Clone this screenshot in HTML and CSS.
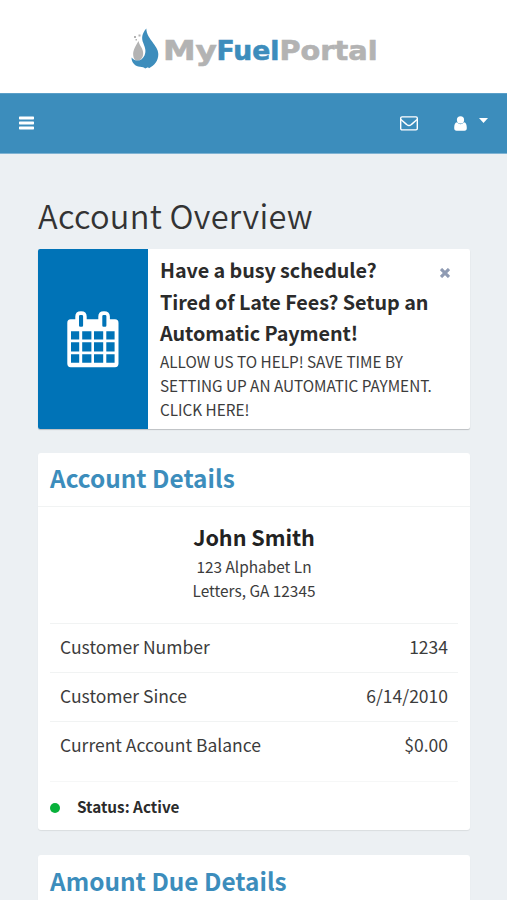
FILE: index.html
```html
<!DOCTYPE html>
<html lang="en">
<head>
<meta charset="utf-8">
<meta name="viewport" content="width=device-width, initial-scale=1">
<title>MyFuelPortal</title>
<link rel="stylesheet" href="styles.css">
</head>
<body>
<header class="brand">
  <svg class="logo" width="250" height="48" viewBox="130 24 250 48" role="img" aria-label="MyFuelPortal">
    <path fill="#b3b3b3" d="M138.500 41C135.800 46 132.800 50 133.200 55C133.500 60 137 62 140 60C143.500 57.500 144 53 142 48.500C140.800 46 139 44 138.500 41Z"/>
    <path fill="#b3b3b3" d="M134 36h2v2h-2zM138.500 34.500h2v2h-2zM135.500 39h1.500v1.500h-1.500z"/>
    <path fill="#3d8dbc" d="M146.300 28.500C142 33.500 141.200 38 143.300 43C145 47.500 146.500 51 144.500 55.500C142 60.500 137 63 131.500 57.500C131.500 63 135.500 66.500 140 66.800C142.500 66.900 144 67.300 145.200 68.500L148 67.200L149 68.200C154.500 65.500 158.500 60.500 158.300 54C158.200 49.500 155.500 46.500 152.800 42.500C149.500 38 146.500 34 146.300 28.500Z"/>
    <text class="logo-text" y="60" x="163" textLength="54" lengthAdjust="spacingAndGlyphs">My</text>
    <text class="logo-text logo-fuel" y="60" x="216.500" textLength="63" lengthAdjust="spacingAndGlyphs">Fuel</text>
    <text class="logo-text" y="60" x="279.500" textLength="98" lengthAdjust="spacingAndGlyphs">Portal</text>
  </svg>
</header>
<nav class="bar">
  <svg class="menu" width="15" height="14" viewBox="0 0 15 14" fill="#fff"><rect width="15" height="3" y=".4" rx=".7"/><rect width="15" height="3" y="5.400" rx=".7"/><rect width="15" height="3" y="10.400" rx=".7"/></svg>
  <svg class="mail" width="18" height="15" viewBox="0 0 18 15" fill="none" stroke="#fff" stroke-width="1.400"><rect x=".7" y=".9" width="16.600" height="13" rx="1.300"/><path d="M.9 3.500C3 5.500 5 7 7 8.700Q9 10.200 11 8.700C13 7 15 5.500 17.100 3.500"/></svg>
  <svg class="user" width="13" height="15" viewBox="0 0 13 15" fill="#fff"><circle cx="6.500" cy="3.900" r="3.600"/><path d="M3 6.300Q6.500 10 10 6.300C12 6.500 12.800 9 12.800 12Q12.800 14.800 10.500 14.800H2.500Q.2 14.800 .2 12C.2 9 1 6.500 3 6.300Z"/></svg>
  <svg class="caret" width="9" height="5" viewBox="0 0 9 5" fill="#fff"><path d="M0 0H9L4.500 5Z"/></svg>
</nav>
<main class="content">
  <h1 class="title">Account Overview</h1>
  <section class="notice">
    <div class="notice-icon">
      <svg width="52" height="57" viewBox="0 0 52 57" fill="#fff" fill-rule="evenodd">
        <path d="M3.700 8.300H8.300V5.500Q8.300 .3 14 .3T19.700 5.500V8.300H31.300V5.500Q31.300 .3 37 .3T42.900 5.500V8.300H48Q51.500 8.300 51.500 12V52.500Q51.500 56.200 48 56.200H3.700Q.3 56.200 .3 52.500V12Q.3 8.300 3.700 8.300ZM13.200 4Q12 4 12 5.200V14.600Q12 15.800 13.200 15.800H14.900Q16.100 15.800 16.100 14.600V5.200Q16.100 4 14.900 4ZM36.500 4Q35.300 4 35.300 5.200V14.600Q35.300 15.800 36.500 15.800H38.200Q39.400 15.800 39.400 14.600V5.200Q39.400 4 38.200 4ZM4 20.200V28.600H12.200V20.200ZM15.200 20.200V28.600H24.400V20.200ZM27 20.200V28.600H36.200V20.200ZM39.300 20.200V28.600H47.600V20.200ZM4 31.300V40.600H12.200V31.300ZM15.200 31.300V40.600H24.400V31.300ZM27 31.300V40.600H36.200V31.300ZM39.300 31.300V40.600H47.600V31.300ZM4 43.300V51.700H12.200V43.300ZM15.200 43.300V51.700H24.400V43.300ZM27 43.300V51.700H36.200V43.300ZM39.300 43.300V51.700H47.600V43.300Z"/>
      </svg>
    </div>
    <div class="notice-body">
      <h2 class="notice-title">Have a busy schedule?<br>Tired of Late Fees? Setup an<br>Automatic Payment!</h2>
      <p class="notice-text">ALLOW US TO HELP! SAVE TIME BY<br>SETTING UP AN AUTOMATIC PAYMENT.<br>CLICK HERE!</p>
    </div>
    <svg class="close" width="10" height="10" viewBox="0 0 10 10" stroke="#8f9bb3" stroke-width="3.100"><path d="M1 1L9 9M9 1L1 9"/></svg>
  </section>
  <section class="card">
    <h2 class="card-title">Account Details</h2>
    <div class="customer">
      <h3 class="name">John Smith</h3>
      <p class="address">123 Alphabet Ln<br>Letters, GA 12345</p>
    </div>
    <dl class="rows">
      <div class="row"><dt>Customer Number</dt><dd>1234</dd></div>
      <div class="row"><dt>Customer Since</dt><dd>6/14/2010</dd></div>
      <div class="row"><dt>Current Account Balance</dt><dd>$0.00</dd></div>
    </dl>
    <div class="status"><span class="dot"></span><span>Status: Active</span></div>
  </section>
  <section class="card">
    <h2 class="card-title">Amount Due Details</h2>
  </section>
</main>
</body>
</html>
```
FILE: styles.css
```css
* { box-sizing: border-box; }
html { height: 100%; overflow: hidden; }
body {
  margin: 0;
  height: 900px;
  overflow: hidden;
  background: #ecf0f3;
  color: #3c3c3c;
  font-family: "Noto Sans CJK SC", "Open Sans", sans-serif;
  white-space: nowrap;
}
h1, h2, h3, p, dl, dd { margin: 0; }
svg { display: block; flex: none; }

.brand { height: 93px; background: #fff; padding: 24px 0 0 130px; }
.logo-text { font: bold 26px "DejaVu Sans", sans-serif; fill: #b3b3b3; stroke: #b3b3b3; stroke-width: .6px; }
.logo-fuel { fill: #3d8dbc; stroke: #3d8dbc; }

.bar {
  height: 61px;
  display: flex;
  align-items: center;
  padding: 0 19px;
  background: #3c8dbc;
  border-top: 1px solid #5b9fc8;
  border-bottom: 1px solid #7fb3d3;
}
.menu { margin-top: -2px; }
.mail { margin-left: auto; }
.user { margin: -1px 0 0 36px; }
.caret { margin: -7px 0 0 12px; }

.content { padding: 41px 37px 0 38px; }
.title { height: 54px; font-size: 32.6px; letter-spacing: .28px; line-height: 40px; font-weight: 350; color: #333; }

.notice {
  position: relative;
  display: flex;
  height: 180px;
  margin-bottom: 24px;
  background: #fff;
  border-radius: 2px;
  box-shadow: 0 1px 1px rgba(0, 0, 0, .2);
  overflow: hidden;
}
.notice-icon { width: 110px; display: flex; align-items: center; justify-content: center; background: #0073b7; }
.notice-body { padding: 5px 0 0 12px; }
.notice-title { font-size: 19.8px; letter-spacing: -.08px; line-height: 31.5px; color: #2b2b2b; }
.notice-text { font-size: 15.3px; line-height: 24.4px; }
.close { position: absolute; top: 19px; right: 20px; }

.card { margin-bottom: 24px; background: #fff; border-radius: 3px; box-shadow: 0 1px 1px rgba(0, 0, 0, .08); }
.card-title {
  height: 54px;
  padding-left: 12px;
  border-bottom: 1px solid #f1f3f3;
  font-size: 24.4px;
  line-height: 50px;
  color: #3c8dbc;
}
.card + .card .card-title { line-height: 51px; }
.customer { height: 116px; padding-top: 14px; text-align: center; }
.name { font-size: 21.6px; letter-spacing: -.05px; line-height: 32px; color: #222; }
.address { padding-top: 1px; font-size: 15.4px; line-height: 24.4px; }
.rows { margin: 0 12px; height: 159px; border-top: 1px solid #f1f3f3; border-bottom: 1px solid #f6f7f7; }
.row {
  height: 49px;
  display: flex;
  justify-content: space-between;
  padding: 0 10px;
  border-bottom: 1px solid #f1f3f3;
  font-size: 17.5px;
  line-height: 45px;
}
.row:last-child { border-bottom: 0; }
.status { height: 48px; display: flex; align-items: center; gap: 17px; padding-left: 12px; font-size: 15.3px; font-weight: bold; line-height: 24px; color: #2b2b2b; }
.dot { width: 10px; height: 10px; border-radius: 50%; background: #08b13b; margin-top: 4px; }
.card + .card { margin-top: 25px; }
```
